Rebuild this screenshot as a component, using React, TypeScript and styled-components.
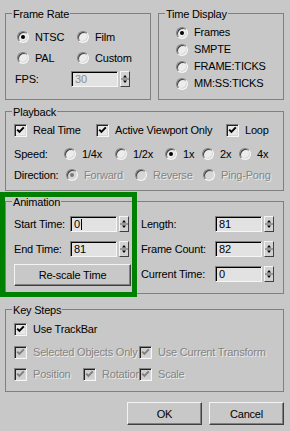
import React from 'react'
import styled, { createGlobalStyle } from 'styled-components'

const GlobalStyle = createGlobalStyle`
  html, body {
    margin: 0;
    padding: 0;
    background: #c8c8c8;
  }
  body {
    font-family: "Liberation Sans", Arial, sans-serif;
    font-size: 11px;
    letter-spacing: -0.2px;
    color: #000;
  }
`

const Dialog = styled.div`
  position: relative;
  width: 290px;
  height: 431px;
  box-sizing: border-box;
  padding: 13px 0 0 5px;
  background: #c8c8c8;
  overflow: hidden;
`

const TopRow = styled.div`
  display: flex;
  gap: 7px;
`

const Group = styled.div<{ $w: number; $h: number; $top?: number; $pad: string }>`
  position: relative;
  box-sizing: border-box;
  width: ${p => p.$w}px;
  height: ${p => p.$h}px;
  margin-top: ${p => p.$top ?? 0}px;
  padding: ${p => p.$pad};
  border: 1px solid #808080;
`

const Legend = styled.span`
  position: absolute;
  top: -6px;
  left: 6px;
  padding: 0 1px;
  line-height: 13px;
  background: #c8c8c8;
  white-space: nowrap;
`

const Line = styled.div<{ $h?: number; $top?: number }>`
  display: flex;
  align-items: center;
  height: ${p => p.$h ?? 16}px;
  margin-top: ${p => p.$top ?? 0}px;
`

const RadioGrid = styled.div`
  display: grid;
  grid-template-columns: 60px auto;
  grid-auto-rows: 20px;
  row-gap: 1px;
  padding-left: 2px;
  align-items: center;
`

const Choice = styled.label<{ $w?: number; $h?: number }>`
  display: flex;
  align-items: center;
  flex: none;
  width: ${p => (p.$w ? `${p.$w}px` : 'auto')};
  height: ${p => p.$h ?? 16}px;
  white-space: nowrap;
`

const Caption = styled.span<{ $off?: boolean }>`
  margin-left: 6px;
  line-height: 13px;
  color: ${p => (p.$off ? '#848484' : '#000')};
  text-shadow: ${p => (p.$off ? '1px 1px 0 #ececec' : 'none')};
`

const FieldLabel = styled.span<{ $w: number }>`
  flex: none;
  width: ${p => p.$w}px;
  line-height: 13px;
  white-space: nowrap;
`

const RadioDot = styled.span<{ $on?: boolean; $off?: boolean }>`
  position: relative;
  flex: none;
  box-sizing: border-box;
  width: 12px;
  height: 12px;
  border-radius: 50%;
  border: 1px solid;
  border-color: #808080 #f6f6f6 #f6f6f6 #808080;
  box-shadow: inset 1px 1px 0 #404040, inset -1px -1px 0 #d8d8d8;
  background: ${p => (p.$off ? '#d6d6d6' : '#ececec')};

  &::after {
    content: '';
    display: ${p => (p.$on ? 'block' : 'none')};
    position: absolute;
    left: 3px;
    top: 3px;
    width: 4px;
    height: 4px;
    border-radius: 50%;
    background: ${p => (p.$off ? '#7a7a7a' : '#000')};
  }
`

const Box = styled.span<{ $off?: boolean }>`
  display: flex;
  align-items: center;
  justify-content: center;
  flex: none;
  box-sizing: border-box;
  width: 13px;
  height: 13px;
  border: 1px solid;
  border-color: #808080 #f6f6f6 #f6f6f6 #808080;
  box-shadow: inset 1px 1px 0 #202020, inset -1px -1px 0 #d8d8d8;
  background: ${p => (p.$off ? '#cfcfcf' : '#e8e8e8')};
`

const FieldBox = styled.div<{ $w: number; $off?: boolean }>`
  flex: none;
  box-sizing: border-box;
  width: ${p => p.$w}px;
  height: 16px;
  padding-left: 3px;
  border: 1px solid;
  border-color: #808080 #f6f6f6 #f6f6f6 #808080;
  box-shadow: inset 1px 1px 0 #000;
  background: #e2e2e2;
  line-height: 14px;
  color: ${p => (p.$off ? '#8c8c8c' : '#000')};
`

const Caret = styled.span`
  display: inline-block;
  width: 1px;
  height: 11px;
  margin-left: 1px;
  vertical-align: -2px;
  background: #000;
`

const SpinBox = styled.span`
  display: flex;
  flex: none;
  box-sizing: border-box;
  width: 10px;
  height: 16px;
  margin-left: 2px;
  border: 1px solid;
  border-color: #f4f4f4 #404040 #404040 #f4f4f4;
  background: #d2d2d2;
`

const Columns = styled.div`
  display: flex;
`

const Column = styled.div<{ $w?: number }>`
  display: flex;
  flex-direction: column;
  width: ${p => (p.$w ? `${p.$w}px` : 'auto')};
`

const Button = styled.button<{ $w: number; $h: number; $top?: number }>`
  flex: none;
  box-sizing: border-box;
  width: ${p => p.$w}px;
  height: ${p => p.$h}px;
  margin: ${p => p.$top ?? 0}px 0 0;
  padding: 0;
  font: inherit;
  letter-spacing: inherit;
  color: #000;
  background: #c8c8c8;
  border: 1px solid;
  border-color: #f4f4f4 #404040 #404040 #f4f4f4;
  box-shadow: inset -1px -1px 0 #808080;
`

const ButtonRow = styled.div`
  display: flex;
  justify-content: flex-end;
  gap: 7px;
  width: 279px;
  margin-top: 10px;
`

const Highlight = styled.div`
  position: absolute;
  left: 0;
  top: 192px;
  box-sizing: border-box;
  width: 137px;
  height: 105px;
  border: 5px solid #008000;
  pointer-events: none;
`

function Radio({ label, w, h, on, off }: { label: string; w?: number; h?: number; on?: boolean; off?: boolean }) {
  return (
    <Choice $w={w} $h={h}>
      <RadioDot $on={on} $off={off} />
      <Caption $off={off}>{label}</Caption>
    </Choice>
  )
}

function Check({ label, w, off }: { label: string; w?: number; off?: boolean }) {
  return (
    <Choice $w={w}>
      <Box $off={off}>
        <svg width="9" height="9" viewBox="0 0 9 9">
          <path d="M1.2 3.6 L3.4 5.9 L7.8 1.4" fill="none" stroke={off ? '#808080' : '#000'} strokeWidth="2" />
        </svg>
      </Box>
      <Caption $off={off}>{label}</Caption>
    </Choice>
  )
}

function Spinner() {
  return (
    <SpinBox>
      <svg width="8" height="14" viewBox="0 0 8 14">
        <path d="M2 5.5 L4 3 L6 5.5 Z" fill="#000" />
        <line x1="0" y1="7" x2="8" y2="7" stroke="#606060" />
        <path d="M2 8.5 L4 11 L6 8.5 Z" fill="#000" />
      </svg>
    </SpinBox>
  )
}

function Field({ label, lw, value, off, caret }: { label: string; lw: number; value: string; off?: boolean; caret?: boolean }) {
  return (
    <>
      <FieldLabel $w={lw}>{label}</FieldLabel>
      <FieldBox $w={47} $off={off}>
        {value}
        {caret && <Caret />}
      </FieldBox>
      <Spinner />
    </>
  )
}

export default function App() {
  return (
    <Dialog>
      <GlobalStyle />

      <TopRow>
        <Group $w={146} $h={87} $pad="13px 0 0 9px">
          <Legend>Frame Rate</Legend>
          <RadioGrid>
            <Radio label="NTSC" on />
            <Radio label="Film" />
            <Radio label="PAL" />
            <Radio label="Custom" />
          </RadioGrid>
          <Line $top={3}>
            <Field label="FPS:" lw={56} value="30" off />
          </Line>
        </Group>

        <Group $w={126} $h={87} $pad="10px 0 0 17px">
          <Legend>Time Display</Legend>
          <Radio label="Frames" h={17} on />
          <Radio label="SMPTE" h={17} />
          <Radio label="FRAME:TICKS" h={17} />
          <Radio label="MM:SS:TICKS" h={17} />
        </Group>
      </TopRow>

      <Group $w={279} $h={80} $top={11} $pad="10px 0 0 8px">
        <Legend>Playback</Legend>
        <Line>
          <Check label="Real Time" w={82} />
          <Check label="Active Viewport Only" w={130} />
          <Check label="Loop" />
        </Line>
        <Line $top={8}>
          <FieldLabel $w={50}>Speed:</FieldLabel>
          <Radio label="1/4x" w={51} />
          <Radio label="1/2x" w={50} />
          <Radio label="1x" w={37} on />
          <Radio label="2x" w={37} />
          <Radio label="4x" />
        </Line>
        <Line $top={5}>
          <FieldLabel $w={52}>Direction:</FieldLabel>
          <Radio label="Forward" w={69} on off />
          <Radio label="Reverse" w={68} off />
          <Radio label="Ping-Pong" off />
        </Line>
      </Group>

      <Group $w={279} $h={93} $top={10} $pad="14px 0 0 8px">
        <Legend>Animation</Legend>
        <Columns>
          <Column $w={127}>
            <Line>
              <Field label="Start Time:" lw={56} value="0" caret />
            </Line>
            <Line $top={9}>
              <Field label="End Time:" lw={56} value="81" />
            </Line>
            <Button $w={117} $h={22} $top={7}>Re-scale Time</Button>
          </Column>
          <Column>
            <Line>
              <Field label="Length:" lw={74} value="81" />
            </Line>
            <Line $top={9}>
              <Field label="Frame Count:" lw={74} value="82" />
            </Line>
            <Line $top={9}>
              <Field label="Current Time:" lw={74} value="0" />
            </Line>
          </Column>
        </Columns>
      </Group>

      <Group $w={279} $h={83} $top={15} $pad="11px 0 0 8px">
        <Legend>Key Steps</Legend>
        <Line>
          <Check label="Use TrackBar" />
        </Line>
        <Line $top={7}>
          <Check label="Selected Objects Only" w={125} off />
          <Check label="Use Current Transform" off />
        </Line>
        <Line $top={6}>
          <Check label="Position" w={69} off />
          <Check label="Rotation" w={56} off />
          <Check label="Scale" off />
        </Line>
      </Group>

      <ButtonRow>
        <Button $w={75} $h={23}>OK</Button>
        <Button $w={75} $h={23}>Cancel</Button>
      </ButtonRow>

      <Highlight />
    </Dialog>
  )
}
